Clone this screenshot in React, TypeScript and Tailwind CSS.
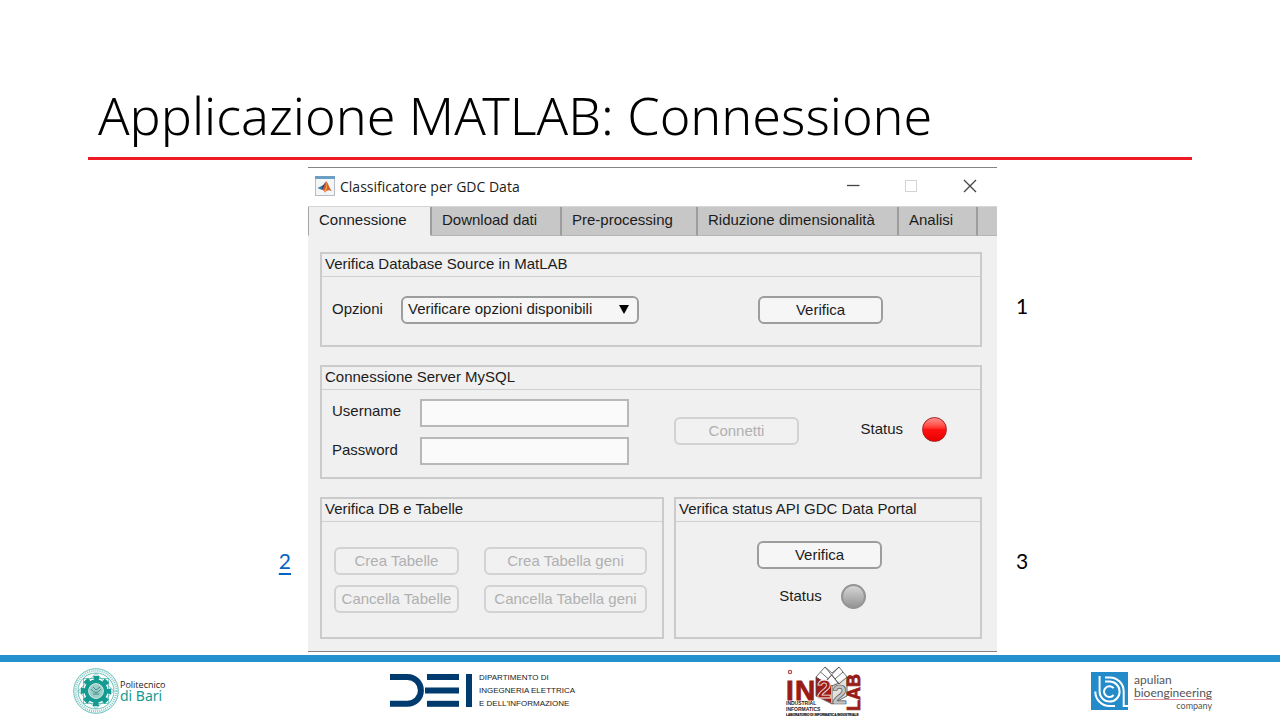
import type { ReactNode } from "react";

const TABS = [
  { label: "Connessione", width: "w-[124px]" },
  { label: "Download dati", width: "w-[130px]" },
  { label: "Pre-processing", width: "w-[136px]" },
  { label: "Riduzione dimensionalità", width: "w-[201px]" },
  { label: "Analisi", width: "w-[79px]" },
];

function Panel({ title, className, children }: { title: string; className: string; children: ReactNode }) {
  return (
    <section className={`flex flex-col border-2 border-[#cbcbcb] ${className}`}>
      <h2 className="h-[23px] border-b border-[#d0d0d0] pl-[3px] leading-5">{title}</h2>
      {children}
    </section>
  );
}

function Button({ children, width, disabled = false }: { children: ReactNode; width: string; disabled?: boolean }) {
  return (
    <button
      type="button"
      disabled={disabled}
      className={`h-7 shrink-0 rounded-md border-2 border-[#9d9d9d] bg-[#f6f6f6] pb-px text-center leading-[23px] whitespace-nowrap disabled:border-[#d2d2d2] disabled:bg-[#f1f1f1] disabled:text-[#b0b0b0] ${width}`}
    >
      {children}
    </button>
  );
}

function Lamp({ on = false }: { on?: boolean }) {
  return (
    <span
      className={`size-[25px] shrink-0 rounded-full ${
        on
          ? "border border-[#a82020] bg-linear-to-b from-[#ff8c8c] via-[#ff1010] to-[#e80000]"
          : "border-2 border-[#949494] bg-linear-to-b from-[#d6d6d6] to-[#959595]"
      }`}
    />
  );
}

function MatlabIcon() {
  return (
    <svg viewBox="0 0 20 20" className="size-5" aria-hidden="true">
      <rect x="0.5" y="0.5" width="19" height="19" fill="#f3f5f7" stroke="#b5bcc3" />
      <rect x="0" y="0" width="20" height="3" fill="#6c9fc4" />
      <path d="M2.5 12 7.5 9.5 9.5 11.5 7 14Z" fill="#3279ae" />
      <path d="M7.5 9.5C9 9 10 6 11 5.5L9.5 12 7 14Z" fill="#34446b" />
      <path d="M11 5.5C13 5.5 14 12.5 17 15 14 13.5 12 14 10 16.5 9 14.5 8 14 7 14 9 13 9.5 7 11 5.5Z" fill="#d8592c" />
      <path d="M11 5.5C12 8 11 13 9 15L10 16.5C12 14.5 12.5 12 12 7Z" fill="#f4a34b" />
    </svg>
  );
}

function PolibaSeal() {
  return (
    <svg viewBox="0 0 46 46" className="size-[46px] shrink-0" fill="none" stroke="#2aa59c" aria-hidden="true">
      <circle cx="23" cy="23" r="22.3" strokeWidth="0.7" />
      <circle cx="23" cy="23" r="20.3" strokeWidth="2.2" strokeDasharray="1 1.1" opacity="0.6" />
      <circle cx="23" cy="23" r="18" strokeWidth="0.7" />
      <rect x="10.5" y="10.5" width="25" height="25" strokeWidth="0.6" />
      <rect x="10.5" y="10.5" width="25" height="25" strokeWidth="0.6" transform="rotate(45 23 23)" />
      <circle cx="23" cy="23" r="13" strokeWidth="4.6" strokeDasharray="5.6 4.61" strokeDashoffset="2.8" stroke="#159a91" />
      <circle cx="23" cy="23" r="9.5" strokeWidth="4" stroke="#159a91" />
      <circle cx="23" cy="23" r="7.4" strokeWidth="0.8" fill="#9ccdc8" stroke="#d5ece9" />
      <path d="M18 21q5 7 10 0M20 19l3 3 4-3M20 26h6" stroke="#3f8f88" strokeWidth="1" />
    </svg>
  );
}

function DeiMark() {
  return (
    <svg viewBox="0 0 82 33" className="h-[33px] w-[82px] shrink-0" fill="#003b70" role="img" aria-label="DEI">
      <path d="M0 3H17.5A13.4 13.4 0 0 1 17.5 29.8H0" fill="none" stroke="#003b70" strokeWidth="6" />
      <rect x="37" y="0" width="32" height="6" />
      <rect x="35" y="13.5" width="34" height="6" />
      <rect x="37" y="26.8" width="32" height="6" />
      <rect x="76" y="0" width="6" height="33" />
    </svg>
  );
}

function IndustrialLabLogo() {
  return (
    <svg viewBox="0 0 78 52" className="h-[52px] w-[78px]" fontFamily="Liberation Sans, Arial, sans-serif" fontWeight="700" role="img" aria-label="Industrial Informatics Lab">
      <path d="M30 11 45 19V37L30 30Z" fill="#9c1c17" />
      <path d="M46 19 61 11V30L46 38Z" fill="#e2e2e2" />
      <g fill="none" stroke="#4a4a4a" strokeWidth="0.8">
        <path d="M30 11 39 1 46 7 53 1 61 11 53 18 46 9 38 17ZM39 1 53 18M53 1 38 17M34.5 6 42.5 13M57 6 49 13" />
        <path d="M30 11V30L46 38 61 30V11M46 19V38M38 17 46 20 53 17" />
      </g>
      <text x="31" y="32" fontSize="26" fill="#9c1c17" stroke="#f6eaea" strokeWidth="0.8">2</text>
      <text x="46" y="38" fontSize="27" fill="#c4c4c4" stroke="#555" strokeWidth="0.7">2</text>
      <text x="0" y="34" fontSize="28" fill="#981b16" stroke="#981b16" strokeWidth="0.8">I</text>
      <text x="9" y="34" fontSize="28" fill="#981b16" stroke="#981b16" strokeWidth="0.8">N</text>
      <circle cx="4" cy="6" r="1.6" fill="none" stroke="#b94b46" strokeWidth="1.2" />
      <text x="74" y="45" fontSize="18" fill="#981b16" stroke="#981b16" strokeWidth="0.8" transform="rotate(-90 74 45)">LAB</text>
      <text x="0" y="39" fontSize="5" fill="#222">INDUSTRIAL</text>
      <text x="0" y="45" fontSize="5" fill="#222">INFORMATICS</text>
      <text x="0" y="50" fontSize="3.2" fill="#222" stroke="#222" strokeWidth="0.2">LABORATORIO DI INFORMATICA INDUSTRIALE</text>
    </svg>
  );
}

function ApulianMark() {
  return (
    <svg viewBox="0 0 37 38" className="h-[38px] w-[37px] shrink-0" fill="none" stroke="#fff" strokeWidth="2" aria-hidden="true">
      <rect width="37" height="38" fill="#238bca" stroke="none" />
      <path d="M22.6 16.2A5.4 5.4 0 1 0 22.6 23" />
      <path d="M8.6 4V19.5A10 10 0 1 0 18.6 9.6H14" />
      <path d="M4.3 19.5A14.3 14.3 0 0 0 18.6 34H24" />
      <path d="M14 5.4H18.6A14 14 0 0 1 32.7 19.5V34H37" />
    </svg>
  );
}

export default function App() {
  return (
    <div className="flex min-h-screen flex-col bg-white font-['Liberation_Sans',Arial,sans-serif] text-[15px] text-[#1c1c1c]">
      <header className="px-[88px] pt-20">
        <h1 className="h-20 border-b-3 border-[#ed1c24] pl-2.5 font-['Noto_Sans','Open_Sans',sans-serif] text-[52px] leading-[70px] font-light whitespace-nowrap text-black">
          Applicazione MATLAB: Connessione
        </h1>
      </header>

      <main className="mt-[7px] grid grid-cols-[308fr_689fr_283fr]">
        <div className="flex justify-end pt-[378px] pr-[17px] font-['Lato',sans-serif] text-[21px] leading-8">
          <a href="#tabelle" className="h-8 text-[#0563c1] underline underline-offset-4">2</a>
        </div>

        <div className="border-y border-[#858585] bg-[#f0f0f0]">
          <div className="flex h-[38px] items-center bg-white pb-[3px] pl-[7px]">
            <MatlabIcon />
            <span className="grow pt-px pl-[5px] font-['Open_Sans','Noto_Sans',sans-serif] text-[14px]">Classificatore per GDC Data</span>
            <div className="flex items-center gap-11 pr-5 text-[#444]">
              <button type="button" aria-label="Riduci a icona">
                <svg viewBox="0 0 14 14" className="size-3.5" stroke="currentColor" strokeWidth="1.3"><path d="M0 6.5H12.5" /></svg>
              </button>
              <button type="button" aria-label="Ingrandisci" disabled className="text-[#d3d3d3]">
                <svg viewBox="0 0 14 14" className="size-3.5" fill="none" stroke="currentColor"><rect x="0.5" y="1.5" width="11" height="11" /></svg>
              </button>
              <button type="button" aria-label="Chiudi">
                <svg viewBox="0 0 14 14" className="size-3.5" stroke="currentColor" strokeWidth="1.3"><path d="M1 1 13 13M13 1 1 13" /></svg>
              </button>
            </div>
          </div>

          <div role="tablist" className="flex h-[30px] border-t border-[#d5d5d5] bg-[#c7c7c7]">
            {TABS.map((tab, i) => (
              <button
                key={tab.label}
                type="button"
                role="tab"
                aria-selected={i === 0}
                className={`shrink-0 border-r-2 border-b border-r-[#9d9d9d] border-b-[#b5b5b5] pb-px pl-2.5 text-left whitespace-nowrap aria-selected:border-b-[#f0f0f0] aria-selected:border-l aria-selected:border-l-[#a5a5a5] aria-selected:bg-[#f0f0f0] ${tab.width}`}
              >
                {tab.label}
              </button>
            ))}
            <div className="grow border-b border-[#b5b5b5]" />
          </div>

          <div className="pt-4 pr-[15px] pb-3 pl-3">
            <Panel title="Verifica Database Source in MatLAB" className="h-[95px]">
              <div className="flex items-center pt-[19px] pr-[97px] pl-2.5">
                <label htmlFor="opzioni" className="w-[69px] shrink-0 pb-0.5">Opzioni</label>
                <div className="relative w-[238px]">
                  <select id="opzioni" className="block h-7 w-full appearance-none rounded-md border-2 border-[#9d9d9d] bg-[#f6f6f6] pb-px pl-[5px]">
                    <option>Verificare opzioni disponibili</option>
                  </select>
                  <svg viewBox="0 0 10 9" className="pointer-events-none absolute top-[9px] right-2.5 h-[9px] w-2.5"><path d="M0 0H10L5 9Z" /></svg>
                </div>
                <div className="grow" />
                <Button width="w-[125px]">Verifica</Button>
              </div>
            </Panel>

            <Panel title="Connessione Server MySQL" className="mt-[18px] h-[114px]">
              <div className="flex items-center pt-[9px] pr-[33px] pl-2.5">
                <div className="grid grid-cols-[88px_209px] items-center gap-y-2.5">
                  <label htmlFor="username" className="pb-1">Username</label>
                  <input id="username" type="text" className="h-7 w-full border-2 border-[#b8b8b8] bg-[#fafafa]" />
                  <label htmlFor="password" className="pb-0.5">Password</label>
                  <input id="password" type="password" className="h-7 w-full border-2 border-[#b8b8b8] bg-[#fafafa]" />
                </div>
                <div className="ml-[45px] flex grow items-center justify-between pb-0.5">
                  <Button width="w-[125px]" disabled>Connetti</Button>
                  <div className="flex items-center gap-[19px] pb-[3px]">
                    <span className="pb-px">Status</span>
                    <Lamp on />
                  </div>
                </div>
              </div>
            </Panel>

            <div className="mt-[18px] grid grid-cols-[344fr_308fr] gap-2.5">
              <Panel title="Verifica DB e Tabelle" className="h-[142px]">
                <div id="tabelle" className="grid grid-cols-[125px_163px] gap-x-[25px] gap-y-2.5 pt-[25px] pl-3">
                  <Button width="w-full" disabled>Crea Tabelle</Button>
                  <Button width="w-full" disabled>Crea Tabella geni</Button>
                  <Button width="w-full" disabled>Cancella Tabelle</Button>
                  <Button width="w-full" disabled>Cancella Tabella geni</Button>
                </div>
              </Panel>
              <Panel title="Verifica status API GDC Data Portal" className="h-[142px]">
                <div className="flex flex-col items-center gap-[15px] pt-[19px] pr-[17px]">
                  <Button width="w-[125px]">Verifica</Button>
                  <div className="flex items-center gap-[19px] pl-1.5">
                    <span className="pb-px">Status</span>
                    <Lamp />
                  </div>
                </div>
              </Panel>
            </div>
          </div>
        </div>

        <div className="flex flex-col gap-[223px] pt-[123px] pl-[19px] font-['Lato',sans-serif] text-[21px] leading-8 text-black">
          <span>1</span>
          <span>3</span>
        </div>
      </main>

      <footer className="mt-[3px] grid grow grid-cols-[317fr_396fr_305fr_189fr] border-t-7 border-[#2490cd] pl-[73px]">
        <div className="flex items-start gap-px pt-1.5">
          <PolibaSeal />
          <div className="pt-[11px] whitespace-nowrap">
            <div className="font-['Open_Sans',sans-serif] text-[9px] leading-[11px] text-[#222]">Politecnico</div>
            <div className="font-['Noto_Sans',sans-serif] text-[14px] leading-3 text-[#159a91]">di Bari</div>
          </div>
        </div>
        <div className="flex items-start gap-[7px] pt-3">
          <DeiMark />
          <p className="-mt-[3px] text-[8px] leading-[13px] whitespace-nowrap text-[#222]">
            DIPARTIMENTO DI<br />INGEGNERIA ELETTRICA<br />E DELL'INFORMAZIONE
          </p>
        </div>
        <div className="pt-1">
          <IndustrialLabLogo />
        </div>
        <div className="flex items-start gap-1.5 pt-2.5">
          <ApulianMark />
          <div className="pt-px font-['Lato',sans-serif] text-[12px] leading-[13px] whitespace-nowrap text-[#555]">
            <div>apulian</div>
            <div className="border-b border-[#df8b95]">bioengineering</div>
            <div className="text-right text-[9px] leading-3">company</div>
          </div>
        </div>
      </footer>
    </div>
  );
}
